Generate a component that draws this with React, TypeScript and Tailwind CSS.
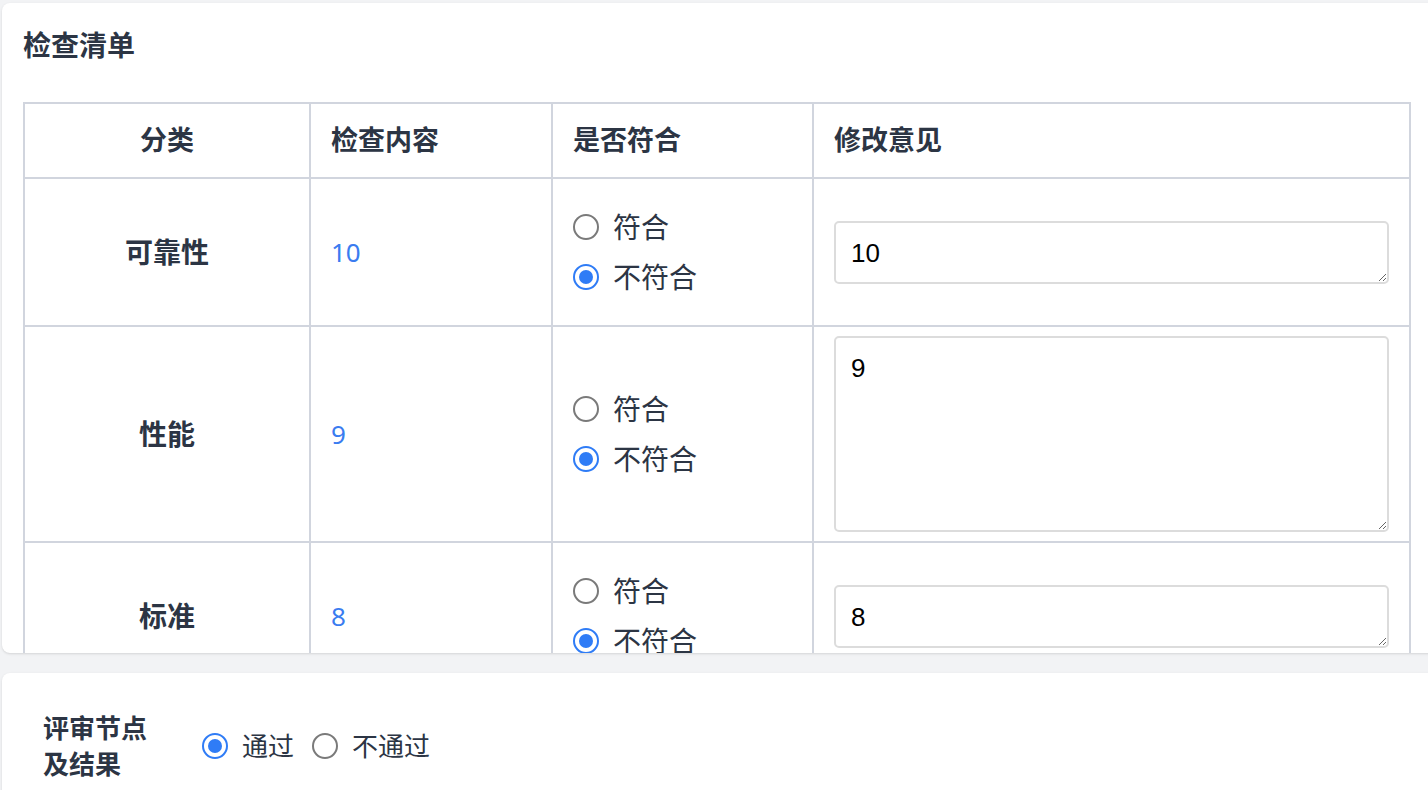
import React from 'react';

const rows = [
  { category: '可靠性', content: '10', ok: false, opinion: '10', tall: false },
  { category: '性能', content: '9', ok: false, opinion: '9', tall: true },
  { category: '标准', content: '8', ok: false, opinion: '8', tall: false },
];

function Radio({ checked }: { checked: boolean }) {
  return checked ? (
    <span className="w-[26px] h-[26px] rounded-full border-2 border-[#2f7cf6] flex items-center justify-center shrink-0">
      <span className="w-[14px] h-[14px] rounded-full bg-[#2f7cf6]" />
    </span>
  ) : (
    <span className="w-[26px] h-[26px] rounded-full border-2 border-[#7a7a7a] shrink-0" />
  );
}

function RadioLine({ checked, label }: { checked: boolean; label: string }) {
  return (
    <label className="flex items-center gap-[14px] h-[50px] text-[28px] text-[#2c3544]">
      <Radio checked={checked} />
      <span>{label}</span>
    </label>
  );
}

export default function App() {
  return (
    <div
      className="w-[1428px] h-[790px] overflow-hidden bg-[#f2f3f5] pt-[3px] pl-[2px]"
      style={{ fontFamily: '"Noto Sans", "Noto Sans CJK SC", sans-serif' }}
    >
      {/* Checklist card */}
      <div className="w-[1440px] h-[650px] overflow-hidden bg-white rounded-[8px] shadow-sm">
        <div className="pl-[21px] pt-[26px] pb-[41px] text-[28px] font-bold text-[#2c3544] leading-[32px]">检查清单</div>

        <div className="pl-[21px]">
          <table className="table-fixed border-collapse w-[1388px]">
            <colgroup>
              <col className="w-[286px]" />
              <col className="w-[242px]" />
              <col className="w-[261px]" />
              <col />
            </colgroup>
            <thead>
              <tr className="h-[75px] text-[27px] font-bold text-[#2c3544]">
                <th className="border-2 border-[#d1d5de] text-center font-bold">分类</th>
                <th className="border-2 border-[#d1d5de] text-left pl-[20px] font-bold">检查内容</th>
                <th className="border-2 border-[#d1d5de] text-left pl-[20px] font-bold">是否符合</th>
                <th className="border-2 border-[#d1d5de] text-left pl-[20px] font-bold">修改意见</th>
              </tr>
            </thead>
            <tbody>
              {rows.map((r) => (
                <tr key={r.category}>
                  <td className="border-2 border-[#d1d5de] text-center text-[28px] font-bold text-[#2c3544]">{r.category}</td>
                  <td className="border-2 border-[#d1d5de] pl-[20px] text-[26px] text-[#3a7cf0]">{r.content}</td>
                  <td className="border-2 border-[#d1d5de] pl-[20px]">
                    <div className="flex flex-col py-[23px]">
                      <RadioLine checked={r.ok} label="符合" />
                      <RadioLine checked={!r.ok} label="不符合" />
                    </div>
                  </td>
                  <td className="border-2 border-[#d1d5de] px-[20px] py-[9px]">
                    <textarea
                      defaultValue={r.opinion}
                      className={`block w-full border-2 border-[#dcdcdc] rounded-[5px] px-[15px] pt-[11px] text-[26px] leading-[38px] text-black outline-none ${r.tall ? 'h-[196px]' : 'h-[63px]'}`}
                      style={{ fontFamily: '"Liberation Sans", Arial, sans-serif' }}
                    />
                  </td>
                </tr>
              ))}
            </tbody>
          </table>
        </div>
      </div>

      {/* Review result card */}
      <div className="mt-[20px] w-[1440px] h-[200px] bg-white rounded-[8px] shadow-sm pl-[41px] pt-[37px] flex items-start">
        <div className="w-[110px] text-[26px] font-bold leading-[36px] text-[#2c3544]">评审节点及结果</div>
        <div className="ml-[49px] flex items-center gap-[18px] h-[72px]">
          <label className="flex items-center gap-[14px] text-[26px] text-[#2c3544]">
            <Radio checked={true} />
            <span>通过</span>
          </label>
          <label className="flex items-center gap-[14px] text-[26px] text-[#2c3544]">
            <Radio checked={false} />
            <span>不通过</span>
          </label>
        </div>
      </div>
    </div>
  );
}
